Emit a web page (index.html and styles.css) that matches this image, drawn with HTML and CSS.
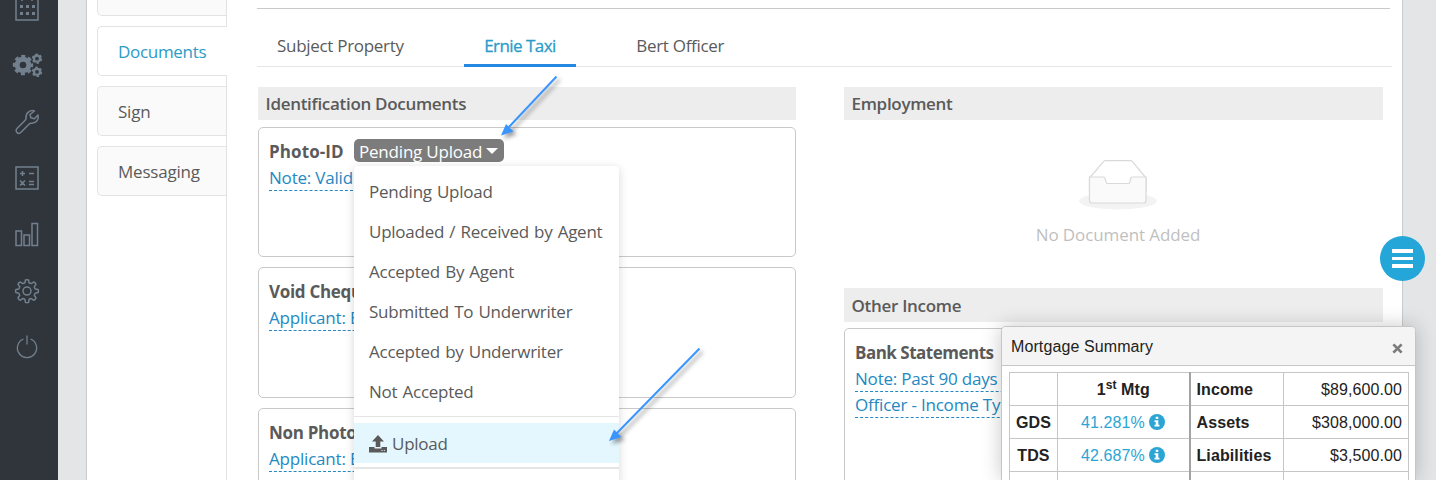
FILE: index.html
```html
<!DOCTYPE html>
<html lang="en">
<head>
<meta charset="UTF-8" />
<title>Documents</title>
<link rel="stylesheet" href="styles.css">
</head>
<body>
  <nav class="sidebar">
    <svg viewBox="0 0 32 32"><g fill="none" stroke="currentColor" stroke-width="1.500"><path d="M5 6h22v21H5zM11 3v5M21 3v5"/></g><path fill="currentColor" d="M9 12h3v3H9zm6 0h3v3h-3zm6 0h3v3h-3zM9 19h3v3H9zm6 0h3v3h-3zm6 0h3v3h-3z"/></svg>
    <svg viewBox="0 0 32 32"><g fill="none" stroke="currentColor"><circle cx="12" cy="16" r="5.800" stroke-width="5"/><circle cx="12" cy="16" r="8.800" stroke-width="2.800" stroke-dasharray="4 2.911" stroke-dashoffset="2"/><circle cx="26" cy="9.700" r="3" stroke-width="2.200"/><circle cx="26" cy="9.700" r="4.400" stroke-width="1.600" stroke-dasharray="2.600 2.007"/><circle cx="26" cy="22.800" r="3" stroke-width="2.200"/><circle cx="26" cy="22.800" r="4.400" stroke-width="1.600" stroke-dasharray="2.600 2.007"/></g></svg>
    <svg viewBox="0 0 32 32"><path fill="none" stroke="currentColor" stroke-width="1.500" stroke-linejoin="round" d="M23.500 5C19 3.500 14.500 7 15 12c.1 1-.2 1.700-.8 2.300l-8 8c-3 3 1 6.800 3.800 4l8.200-8.300c.6-.6 1.400-.9 2.300-.8 4.800.3 7.800-4 6.500-8.200l-3.600 3.700-3.600-.9-.8-3.300z"/></svg>
    <svg viewBox="0 0 32 32"><g fill="none" stroke="currentColor" stroke-width="1.500"><path d="M5 5h22v22H5z"/><path d="M9 11.500h5M11.500 9v5M18 11.500h5M9 18.500l5 5M14 18.500l-5 5M18 19.500h5M18 22.500h5"/></g></svg>
    <svg viewBox="0 0 32 32"><path fill="none" stroke="currentColor" stroke-width="1.500" d="M5 12h5.500v14.500H5zM13 16h5.500v10.500H13zM21 4.500h5.500v22H21z"/></svg>
    <svg viewBox="0 0 32 32"><g fill="none" stroke="currentColor" stroke-width="1.500" stroke-linejoin="round"><path d="M14.400 5q1.600-.7 3.200 0l.4 2.600q.9.900 2.300 1l2.300-1.600q2 .5 2.400 2.400l-1.700 2.300q.1 1.400 1 2.300l2.800.6q.7 1.500 0 3l-2.800.6q-.9.900-1 2.300l1.700 2.300q-.4 1.900-2.400 2.400l-2.300-1.600q-1.400.1-2.300 1l-.4 2.800q-1.600.7-3.200 0l-.4-2.800q-.9-.9-2.300-1l-2.300 1.600q-2-.5-2.400-2.400l1.700-2.300q-.1-1.400-1-2.300l-2.800-.6q-.7-1.500 0-3l2.800-.6q.9-.9 1-2.300L7 9.400q.4-1.900 2.400-2.400l2.300 1.600q1.400-.1 2.300-1z"/><circle cx="16" cy="16.100" r="4"/></g></svg>
    <svg viewBox="0 0 32 32"><path fill="none" stroke="currentColor" stroke-width="1.300" d="M16 4.500v9M12.500 8a9.600 9.600 0 1 0 7 0"/></svg>
  </nav>

  <main class="page">
    <div class="steps">
      <a class="step"></a>
      <a class="step active">Documents</a>
      <a class="step">Sign</a>
      <a class="step">Messaging</a>
    </div>

    <div class="content">
      <hr class="rule">
      <div class="tabs">
        <a class="tab">Subject Property</a>
        <a class="tab active">Ernie Taxi</a>
        <a class="tab">Bert Officer</a>
      </div>

      <div class="columns">
        <section class="column">
          <h3>Identification Documents</h3>
          <div class="card">
            <div class="card-head">
              <b class="wide">Photo-ID</b>
              <div class="status">
                <button class="badge">Pending Upload<i class="caret"></i></button>
                <div class="menu">
                  <a>Pending Upload</a>
                  <a>Uploaded / Received by Agent</a>
                  <a>Accepted By Agent</a>
                  <a>Submitted To Underwriter</a>
                  <a>Accepted by Underwriter</a>
                  <a>Not Accepted</a>
                  <hr>
                  <a class="hover"><svg class="upload" viewBox="0 0 18 18"><path fill="currentColor" d="M9 0l6 6.500h-3.700V12H6.700V6.500H3zM0 12h5.500v1.500h7V12H18v5.500H0zm12.500 3v1h1v-1zm2.300 0v1h1v-1z"/></svg>Upload</a>
                  <hr class="thick">
                </div>
              </div>
            </div>
            <span class="note">Note: Valid</span>
          </div>
          <div class="card">
            <div class="card-head"><b>Void Cheque</b></div>
            <span class="note">Applicant: Ernie</span>
          </div>
          <div class="card">
            <div class="card-head"><b>Non Photo-ID</b></div>
            <span class="note">Applicant: Ernie</span>
          </div>
        </section>

        <section class="column">
          <h3>Employment</h3>
          <div class="empty">
            <svg viewBox="0 0 78 50"><ellipse cx="39" cy="41" rx="39" ry="8.500" fill="#f3f3f3"/><g stroke="#d9d9d9" stroke-width="1.200" stroke-linejoin="round"><path fill="#fff" d="M10.500 18L24.500 1.600q.8-.9 2-.9h25q1.200 0 2 .9l13.500 16.400v14h-56.500z"/><path fill="#fafafa" d="M10.500 17h13.800q1.400 0 1.800 1.400l1 3.700q.4 1.400 1.800 1.400h20.200q1.400 0 1.700-1.400l.9-3.700q.3-1.400 1.700-1.400H67v23.500q0 2.500-2.500 2.500H13q-2.500 0-2.500-2.500z"/></g></svg>
            <p>No Document Added</p>
          </div>
          <h3 class="other">Other Income</h3>
          <div class="card tall">
            <div class="card-head"><b>Bank Statements</b></div>
            <span class="note">Note: Past 90 days required</span>
            <span class="note">Officer - Income Type</span>
          </div>
        </section>
      </div>
    </div>
  </main>

  <button class="fab"><i></i><i></i><i></i></button>

  <aside class="summary">
    <header>Mortgage Summary
      <svg viewBox="0 0 12 12"><path stroke="#7c7c7c" stroke-width="3" d="M1.500 1.500l9 9M10.500 1.500l-9 9"/></svg>
    </header>
    <table>
      <tr><th></th><th>1<sup>st</sup> Mtg</th><th class="name">Income</th><td>$89,600.00</td></tr>
      <tr><th>GDS</th><td class="ratio">41.281% <svg viewBox="0 0 16 16"><circle cx="8" cy="8" r="8" fill="currentColor"/><path fill="#fff" d="M6.700 2.800h2.600v2.300H6.700zM5.500 6.300h3.800v4.500h1.200v1.700h-5v-1.700h1.200V8H5.500z"/></svg></td><th class="name">Assets</th><td>$308,000.00</td></tr>
      <tr><th>TDS</th><td class="ratio">42.687% <svg viewBox="0 0 16 16"><circle cx="8" cy="8" r="8" fill="currentColor"/><path fill="#fff" d="M6.700 2.800h2.600v2.300H6.700zM5.500 6.300h3.800v4.500h1.200v1.700h-5v-1.700h1.200V8H5.500z"/></svg></td><th class="name">Liabilities</th><td>$3,500.00</td></tr>
      <tr><th></th><td></td><th></th><td></td></tr>
    </table>
  </aside>

  <svg class="arrows" viewBox="0 0 1436 480">
    <g class="arrow"><path stroke="#3a95ff" stroke-width="2" d="M556.500 76.500L508 128"/><path fill="#3a95ff" d="M501 135.500l5-11.500 7.500 7.500z"/></g>
    <g class="arrow"><path stroke="#3a95ff" stroke-width="2" d="M699.500 348.500L616 434"/><path fill="#3a95ff" d="M609 441l5-11.500 7.500 7.500z"/></g>
  </svg>
</body>
</html>
```
FILE: styles.css
```css
* {
  box-sizing: border-box;
}
body {
  margin: 0;
  width: 1436px;
  height: 480px;
  overflow: hidden;
  display: flex;
  background: #e3e5e7;
  font-family: "Open Sans", sans-serif;
  font-size: 17px;
  letter-spacing: -0.3px;
  color: #5a5a5a;
}
button {
  border: none;
  font: inherit;
  letter-spacing: inherit;
}
.sidebar {
  width: 58px;
  flex: none;
  background: #30353c;
  color: #72808d;
  display: flex;
  flex-direction: column;
  align-items: center;
  gap: 24.4px;
  padding-right: 5px;
}
.sidebar svg {
  width: 32px;
  height: 32px;
  flex: none;
}
.sidebar svg:first-child {
  margin-top: -7px;
}

/* main sheet */
.page {
  width: 1317px;
  margin-left: 28px;
  background: #fff;
  border: 1px solid #c9cbcd;
  border-width: 0 1px;
  display: flex;
  height: 480px;
  overflow: hidden;
}
.steps {
  width: 140px;
  flex: none;
  padding-left: 10px;
  border-right: 1px solid #e3e3e3;
  display: flex;
  flex-direction: column;
  gap: 10px;
  margin-top: -34px;
  height: 514px;
}
.step {
  height: 50px;
  flex: none;
  line-height: 49px;
  padding-left: 20px;
  background: #fafafa;
  border: 1px solid #e3e3e3;
  border-right: none;
  border-radius: 5px 0 0 5px;
  letter-spacing: -0.2px;
}
.step.active {
  background: #fff;
  color: #2b9cc8;
  margin-right: -1px;
  letter-spacing: -0.3px;
}
.content {
  flex: 1;
  padding: 8px 10px 0 30px;
}
.rule {
  margin: 0 2px 0 0;
  border: none;
  border-top: 1px solid #c9c9c9;
}
.tabs {
  height: 58px;
  border-bottom: 1px solid #e6e6e6;
  display: flex;
  gap: 20px;
}
.tab {
  height: 58px;
  line-height: 74px;
  padding: 0 20px;
}
.tab.active {
  color: #2b9cc8;
  -webkit-text-stroke: 0.3px #2b9cc8;
  letter-spacing: -0.55px;
  border-bottom: 3px solid #2589e2;
  margin: 0 20.5px;
}
.columns {
  display: flex;
  gap: 48px;
  padding: 20px 9px 0 1px;
}
.column {
  width: 539px;
}
.column:first-child {
  width: 538px;
}
h3 {
  margin: 0 0 7px;
  height: 33px;
  line-height: 33px;
  padding-left: 7.5px;
  font-size: 17px;
  font-weight: 600;
  background: #ededed;
}
h3.other {
  height: 34px;
  line-height: 35px;
  margin-bottom: 6px;
}
.card {
  height: 130.4px;
  margin-bottom: 10px;
  padding: 11px 10px;
  border: 1px solid #c9c9c9;
  border-radius: 5px;
}
.card.tall {
  height: 180px;
}
.tall b {
  letter-spacing: -0.5px;
}
.card-head {
  display: flex;
  gap: 10px;
  height: 26px;
  line-height: 26px;
  white-space: nowrap;
}
.card-head .wide {
  width: 75px;
  letter-spacing: 0.1px;
}
.note {
  display: table;
  height: 24px;
  line-height: 25px;
  margin-bottom: 2px;
  color: #2489c2;
  border-bottom: 1px dashed #2489c2;
  white-space: nowrap;
  letter-spacing: -0.2px;
}
.tall .note {
  margin: 0;
}
.status {
  position: relative;
}
.badge {
  display: flex;
  align-items: center;
  width: 150px;
  height: 23px;
  line-height: 23px;
  padding: 1px 5px 0;
  letter-spacing: -0.2px;
  white-space: nowrap;
  background: #7c7c7c;
  color: #fff;
  border-radius: 5px;
}
.caret {
  margin-left: 4px;
  border: 6px solid transparent;
  border-top-color: #fff;
  border-bottom: none;
}
.menu {
  position: absolute;
  z-index: 2;
  left: 0;
  top: 27px;
  width: 265px;
  height: 340px;
  padding-top: 5px;
  background: #fff;
  border-radius: 4px;
  box-shadow: 0 2px 10px rgba(0, 0, 0, 0.16);
  letter-spacing: -0.25px;
  word-spacing: 1px;
}
.menu a {
  display: flex;
  align-items: center;
  height: 40px;
  padding: 2px 0 0 15px;
}
.menu a.hover {
  background: #e4f6fe;
}
.menu hr {
  margin: 5px 0 6px;
  border: none;
  border-top: 1px solid #e5e5e5;
}
.menu hr.thick {
  margin-top: 4px;
  border-width: 2px;
}
.upload {
  width: 18px;
  height: 18px;
  margin-right: 5px;
}
.empty {
  height: 161px;
  padding-top: 33px;
  padding-left: 9px;
  text-align: center;
  color: #bfbfbf;
}
.empty svg {
  display: block;
  width: 78px;
  height: 50px;
  margin: 0 auto;
}
.empty p {
  margin: 13px 0 0;
  letter-spacing: -0.1px;
}

/* floating menu button */
.fab {
  position: absolute;
  left: 1380px;
  top: 236px;
  width: 45px;
  height: 45px;
  padding: 0 12px;
  border-radius: 50%;
  background: #24a6d8;
  display: flex;
  flex-direction: column;
  justify-content: center;
  gap: 4px;
}
.fab i {
  height: 3.500px;
  background: #fff;
}

.summary {
  position: absolute;
  left: 1001px;
  top: 326px;
  width: 415px;
  height: 154px;
  overflow: hidden;
  background: #fff;
  border: 1px solid #c6c6c6;
  border-bottom: none;
  border-radius: 5px 5px 0 0;
  box-shadow: 0 0 20px rgba(0, 0, 0, 0.22);
  font-family: "Liberation Sans", sans-serif;
  font-size: 16px;
  letter-spacing: 0.1px;
  color: #222;
}
.summary header {
  display: flex;
  justify-content: space-between;
  align-items: center;
  height: 39px;
  padding: 2px 12px 0 9px;
  background: #f4f4f4;
  border-bottom: 1px solid #c6c6c6;
}
.summary header svg {
  width: 11px;
  height: 11px;
  margin-top: 2px;
}
table {
  width: 400px;
  margin: 6px 0 0 7px;
  table-layout: fixed;
  border-collapse: collapse;
}
td, th {
  height: 33px;
  padding: 2px 6px 0;
  border: 1px solid #c6c6c6;
  text-align: right;
}
th {
  padding: 2px 0 0;
  text-align: center;
}
th:first-child {
  width: 48px;
}
th:nth-child(2) {
  width: 132px;
}
.name {
  width: 94px;
}
th:nth-child(3) {
  padding-left: 6px;
  text-align: left;
  border-left: 2px solid #a3a3a3;
}
td.ratio {
  text-align: center;
  color: #2ba5d3;
}
.ratio svg {
  width: 16px;
  height: 16px;
  vertical-align: -2px;
}
sup {
  font-size: 12px;
  line-height: 0;
}

.arrows {
  position: absolute;
  left: 0;
  top: 0;
  width: 1436px;
  height: 480px;
  z-index: 5;
  pointer-events: none;
}
.arrow {
  filter: drop-shadow(3px 3px 2px rgba(0, 0, 0, 0.4));
}
```
